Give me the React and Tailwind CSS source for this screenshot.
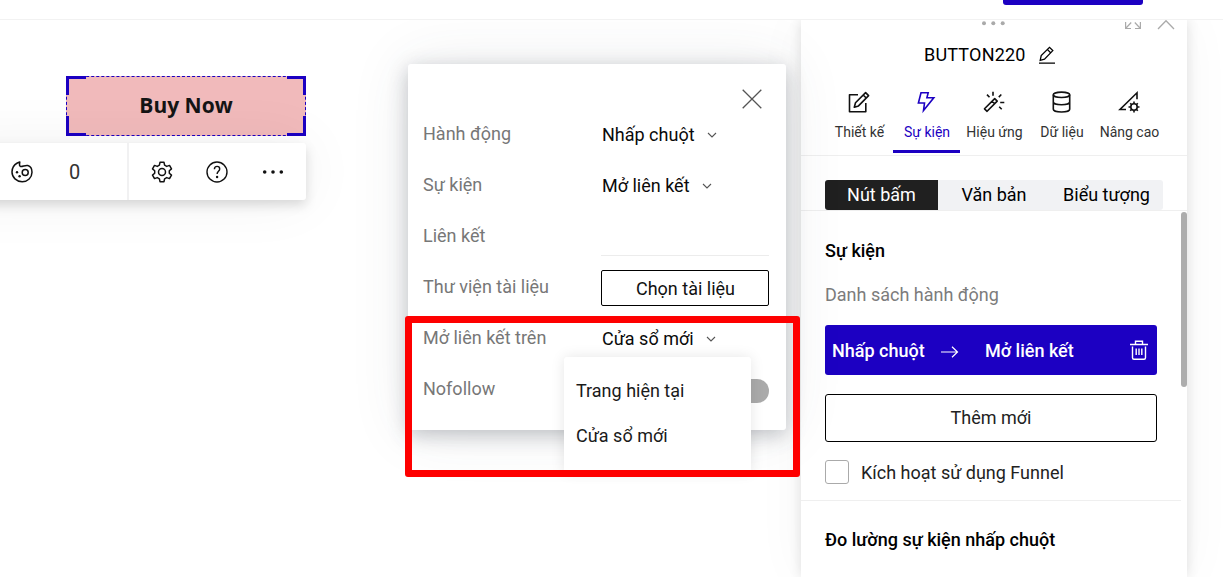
import React from "react";

function Svg({ w = 24, h = 24, sw = 1.5, className = "", children }) {
  return (
    <svg
      width={w}
      height={h}
      viewBox={`0 0 ${w} ${h}`}
      fill="none"
      stroke="currentColor"
      strokeWidth={sw}
      className={`shrink-0 ${className}`}
    >
      {children}
    </svg>
  );
}

const Palette = () => (
  <Svg sw={1.5}>
    <path
      strokeLinejoin="round"
      d="M9.800 2 7.300 3C4 4.800 2 8.200 2 12c0 5.500 4.500 9.700 10.200 9.700 5.500 0 9.800-4.200 9.800-9.400 0-3.600-1.700-6.200-4.200-6.800-2.800-.6-5.300 1.400-7.300.9C8.800 6 9.600 4.600 9.800 2Z"
    />
    <circle cx="15.200" cy="12.400" r="3" />
    <circle cx="7" cy="12.200" r="1.200" fill="currentColor" stroke="none" />
    <circle cx="9.600" cy="16.300" r="1.200" fill="currentColor" stroke="none" />
  </Svg>
);

const Gear = () => (
  <Svg sw={1.5}>
    <circle cx="12" cy="12" r="3.500" />
    <path
      strokeLinejoin="round"
      d="M10 2.300h4l.6 2.900 2.100 1.200 2.800-1 2 3.500-2.200 1.900v2.400l2.200 1.900-2 3.500-2.800-1-2.100 1.200-.6 2.900h-4l-.6-2.900-2.100-1.200-2.800 1-2-3.500 2.200-1.900v-2.400L2.500 8.900l2-3.500 2.800 1 2.100-1.200Z"
    />
  </Svg>
);

const Help = () => (
  <Svg sw={1.4}>
    <circle cx="12" cy="12" r="10" />
    <path d="M9.400 9.200c0-1.700 1.100-2.800 2.700-2.800s2.600 1 2.600 2.500c0 2.300-2.600 2.300-2.600 5.100" />
    <circle cx="12.100" cy="17" r="1.200" fill="currentColor" stroke="none" />
  </Svg>
);

const Dots = () => (
  <svg width="24" height="24" viewBox="0 0 24 24" fill="currentColor" className="shrink-0">
    <circle cx="3.700" cy="12" r="1.800" />
    <circle cx="12" cy="12" r="1.800" />
    <circle cx="20.300" cy="12" r="1.800" />
  </svg>
);

const Chevron = () => (
  <Svg w={10} h={6} sw={1.1} className="text-[#555]">
    <path d="M1 1l4 4 4-4" />
  </Svg>
);

const DesignIcon = () => (
  <Svg sw={1.6}>
    <path strokeLinejoin="round" d="M11 4.700H2.500v17h16.300V13" />
    <path strokeLinejoin="round" d="M7.300 17.300l1.200-4.600L18.600 2.600l3 3L11.500 15.900l-4.200 1.400ZM16.200 5l3 3" />
  </Svg>
);

const BoltIcon = () => (
  <Svg sw={1.6}>
    <path d="M6 2.700h7.200L11.900 7.800h6.900L8.500 20.600l1-7.600H3.400L6 2.700Z" />
  </Svg>
);

const WandIcon = () => (
  <Svg sw={1.6}>
    <path strokeLinejoin="round" d="M12.700 8.600l2.500 2.500L5.100 21.300l-2.600-2.500L12.700 8.600ZM10.100 11.200l2.500 2.500" />
    <path d="M11 1.800v3.900M18.200 12.500h4.100M5 4.600l2.500 2.600M19.300 4.500l-2.500 2.600M17.200 16.700l2.500 2.500" />
  </Svg>
);

const DatabaseIcon = () => (
  <Svg sw={1.6}>
    <ellipse cx="11.500" cy="4.800" rx="8.200" ry="2.700" />
    <path d="M3.300 4.800v14.500c0 1.500 3.700 2.700 8.200 2.700s8.200-1.200 8.200-2.700V4.800M3.300 12c0 1.500 3.700 2.700 8.200 2.700s8.200-1.200 8.200-2.700" />
  </Svg>
);

const AdvancedIcon = () => (
  <Svg sw={1.6}>
    <path d="M9 19.500H3L20 2.800v6.500" />
    <circle cx="17" cy="17" r="3.200" />
    <path d="M17 13.800v-2.300M17 22.500v-2.300M13.800 17h-2.300M22.500 17h-2.300M14.700 14.700l-1.500-1.500M20.800 20.800l-1.500-1.500M14.700 19.300l-1.500 1.500M20.800 13.200l-1.500 1.500" />
  </Svg>
);

const tabs = [
  ["Thiết kế", DesignIcon, "w-[68px]"],
  ["Sự kiện", BoltIcon, "w-[67px]"],
  ["Hiệu ứng", WandIcon, "w-[68px]"],
  ["Dữ liệu", DatabaseIcon, "w-[67px]"],
  ["Nâng cao", AdvancedIcon, "w-[68px]"],
];

function SelectValue({ children }) {
  return (
    <div className="flex items-center gap-3 pl-px pt-[2px] text-[#0a0a0a]">
      <span>{children}</span>
      <Chevron />
    </div>
  );
}

function Row({ label, children }) {
  return (
    <div className="flex h-[51px] items-center">
      <div className="w-[178px] shrink-0 text-[#777]">{label}</div>
      {children}
    </div>
  );
}

function ButtonElement() {
  return (
    <div className="absolute left-[66px] top-14 flex h-[60px] w-60 items-center justify-center border border-dashed border-[#1c00c2] bg-[#f1babb] text-[#151515]">
      <span className="pb-px font-['Open_Sans'] text-[21px] font-bold">Buy Now</span>
      <span className="absolute -left-px -top-px h-[19px] w-5 border-l-3 border-t-3 border-[#1c00c2]" />
      <span className="absolute -right-px -top-px h-[19px] w-[19px] border-r-3 border-t-3 border-[#1c00c2]" />
      <span className="absolute -bottom-px -left-px h-5 w-5 border-b-3 border-l-3 border-[#1c00c2]" />
      <span className="absolute -bottom-px -right-px h-5 w-[19px] border-b-3 border-r-3 border-[#1c00c2]" />
    </div>
  );
}

function Toolbar() {
  return (
    <div className="absolute left-[-60px] top-[123px] flex h-[57px] w-[366px] rounded-[3px] bg-white text-[#111] shadow-[0_5px_12px_rgba(0,0,0,0.14),0_0_60px_rgba(0,0,0,0.06)]">
      <div className="flex w-[187px] items-center pl-[70px]">
        <Palette />
        <span className="ml-[35px] text-[20px] text-[#333]">0</span>
      </div>
      <div className="flex flex-1 items-center gap-[31px] border-l-2 border-[#f1f1f2] pl-[21px]">
        <Gear />
        <Help />
        <span className="pl-px">
          <Dots />
        </span>
      </div>
    </div>
  );
}

function ActionPopover() {
  return (
    <div className="absolute left-[408px] top-11 z-10 h-[366px] w-[378px] rounded-[3px] bg-white px-[15px] shadow-[0_5px_20px_rgba(60,66,80,0.3),0_0_60px_rgba(60,66,80,0.1)]">
      <div className="flex h-11 justify-end pr-[9px] pt-[25px]">
        <Svg w={20} h={20} sw={1.3} className="text-[#555]">
          <path d="M.7.700l18.600 18.600M19.300.700L.7 19.300" />
        </Svg>
      </div>
      <Row label="Hành động">
        <SelectValue>Nhấp chuột</SelectValue>
      </Row>
      <Row label="Sự kiện">
        <SelectValue>Mở liên kết</SelectValue>
      </Row>
      <Row label="Liên kết">
        <div className="mt-[40px] h-px w-[168px] bg-[#ececec]" />
      </Row>
      <Row label="Thư viện tài liệu">
        <div className="mt-[2px] flex h-9 w-[168px] items-center justify-center rounded-[2px] border border-black pl-px pt-[2px] text-[#111]">
          Chọn tài liệu
        </div>
      </Row>
      <Row label="Mở liên kết trên">
        <SelectValue>Cửa sổ mới</SelectValue>
      </Row>
      <Row label="Nofollow">
        <div className="ml-[118px] mt-[4px] h-6 w-[50px] rounded-full bg-[#aaaaaa]" />
      </Row>
    </div>
  );
}

function OptionMenu() {
  return (
    <div className="absolute left-[564px] top-[337px] z-20 flex h-[115px] w-[187px] flex-col rounded-t-[3px] bg-white px-3 pt-[11px] text-[#1a1a1a] shadow-[0_0_14px_rgba(0,0,0,0.1)]">
      <div className="flex h-[45px] items-center">Trang hiện tại</div>
      <div className="flex h-[45px] items-center">Cửa sổ mới</div>
    </div>
  );
}

function Inspector() {
  return (
    <aside className="relative flex w-[386px] shrink-0 flex-col bg-white shadow-[0_0_12px_rgba(0,0,0,0.12),0_0_50px_rgba(0,0,0,0.04)]">
      <div className="flex h-[15px] items-start text-[#aaa]">
        <svg width="24" height="8" viewBox="0 0 24 8" fill="currentColor" className="ml-[180px]">
          <circle cx="3" cy="3.300" r="2" />
          <circle cx="12.300" cy="3.300" r="2" />
          <circle cx="21.700" cy="3.300" r="2" />
        </svg>
        <Svg w={18} h={10} sw={1.2} className="ml-[119px]">
          <path d="M1.600 2v6.500H7M1.600 8.500l5.600-6M16.400 2v6.500H11M16.400 8.500l-5.600-6" />
        </Svg>
        <Svg w={18} h={10} sw={1.3} className="ml-[15px]">
          <path d="M1 9l8-8.300L17 9" />
        </Svg>
      </div>
      <div className="flex h-[43px] items-start pl-[123px] pt-[6px] text-black">
        <span className="text-[18px] leading-7 tracking-[0.2px]">BUTTON220</span>
        <Svg w={18} h={18} sw={1.3} className="ml-[12px] mt-[5px]">
          <path d="M1 17.200h16M2.200 14.300l1-4.800L11.500 1.300l3.300 3.300-8.300 8.500L2.200 14.300ZM9.300 3.400l3.300 3.300" />
        </Svg>
      </div>
      <nav className="flex h-[78px] border-b border-[#efefef] pl-6">
        {tabs.map(([label, Icon, width], i) => (
          <div
            key={label}
            className={`flex h-[75px] flex-col items-center border-b-3 pt-[12px] ${width} ${
              i === 1 ? "border-[#1c00c2] text-[#1c00c2]" : "border-transparent text-[#111]"
            }`}
          >
            <Icon />
            <span className={`mt-[8px] whitespace-nowrap pl-px text-[14px] leading-5 ${i === 1 ? "" : "text-[#333]"}`}>{label}</span>
          </div>
        ))}
      </nav>
      <div className="flex h-[55px] items-end border-b border-[#efefef] pl-6">
        <div className="flex h-[30px] w-[338px] overflow-hidden rounded-[3px] bg-[#f1f2f4] text-black">
          <div className="flex w-[113px] items-center justify-center bg-[#202020] pb-[2px] text-white">Nút bấm</div>
          <div className="flex w-[112px] items-center justify-center pb-[2px]">Văn bản</div>
          <div className="flex flex-1 items-center justify-center pb-[2px]">Biểu tượng</div>
        </div>
      </div>
      <div className="flex flex-1">
        <div className="w-[380px]">
          <section className="flex h-[290px] flex-col border-b border-[#efefef] px-6 pt-[26px]">
            <h2 className="h-7 font-medium leading-7 text-black">Sự kiện</h2>
            <p className="mt-4 h-7 leading-7 text-[#7c7c7c]">Danh sách hành động</p>
            <div className="mt-4 flex h-[50px] w-[332px] items-center rounded-[3px] bg-[#1c00c2] pl-[7px] text-white">
              <span className="w-[109px] font-medium">Nhấp chuột</span>
              <Svg w={18} h={12} sw={1.2} className="mt-[3px]">
                <path d="M0 6h16.500M11 .7L16.500 6 11 11.300" />
              </Svg>
              <span className="ml-[26px] w-[144px] font-medium">Mở liên kết</span>
              <Svg w={20} h={20} sw={1.4}>
                <path d="M1 4.500h18M6.500 4.500V1.200h7v3.300M3.500 6.500v11.200q0 1.500 1.500 1.500h10q1.500 0 1.500-1.500V6.500M7.200 8.500v6.500M10 8.500v6.500M12.800 8.500v6.500" />
              </Svg>
            </div>
            <div className="mt-[19px] flex h-12 w-[332px] items-center justify-center rounded-[3px] border border-black pb-[2px] text-[#222]">
              Thêm mới
            </div>
            <div className="mt-[18px] flex h-6 items-center gap-3 text-[#222]">
              <span className="h-6 w-6 rounded-[3px] border border-[#aaa]" />
              <span>Kích hoạt sử dụng Funnel</span>
            </div>
          </section>
          <h2 className="px-6 pt-[25px] font-medium leading-7 text-black">Đo lường sự kiện nhấp chuột</h2>
        </div>
        <div className="mt-px h-[175px] w-[6px] rounded-[3px] bg-[#adadad]" />
      </div>
    </aside>
  );
}

export default function App() {
  return (
    <div className="flex h-[577px] w-[1223px] flex-col overflow-hidden bg-white font-[Roboto,sans-serif] text-[18px] text-[#111]">
      <header className="flex h-5 shrink-0 border-b border-[#f2f2f2] pl-[1003px]">
        <div className="h-[5px] w-[140px] rounded-b-[3px] bg-[#1c00c2]" />
      </header>
      <main className="relative flex flex-1 overflow-hidden bg-white">
        <div className="w-[801px] shrink-0">
          <ButtonElement />
          <Toolbar />
          <ActionPopover />
          <OptionMenu />
        </div>
        <Inspector />
        <div className="absolute left-[405px] top-[296px] z-30 h-[161px] w-[395px] rounded-[3px] border-7 border-[#fe0000]" />
      </main>
    </div>
  );
}
